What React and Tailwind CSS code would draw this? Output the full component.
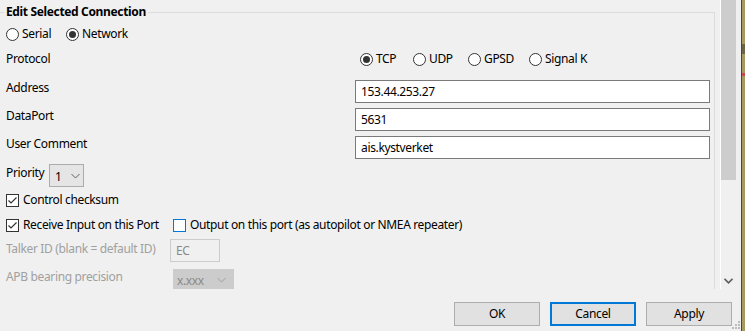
import React from "react";

function Radio({ checked, label, className = "" }) {
  return (
    <div className={"flex items-center " + className}>
      <span className="w-[13px] h-[13px] rounded-full border border-[#333333] bg-white flex items-center justify-center shrink-0">
        {checked && <span className="w-[7px] h-[7px] rounded-full bg-[#333333]" />}
      </span>
      <span className="ml-[3px]">{label}</span>
    </div>
  );
}

function Check({ checked, label, blue, className = "" }) {
  return (
    <div className={"flex items-center " + className}>
      <span
        className={
          "w-[13px] h-[13px] border bg-white flex items-center justify-center shrink-0 " +
          (blue ? "border-[#0078d7]" : "border-[#333333]")
        }
      >
        {checked && (
          <svg width="11" height="11" viewBox="0 0 11 11">
            <path d="M1.5 5.5 L4 8 L9.5 2.5" fill="none" stroke="#333333" strokeWidth="1.2" />
          </svg>
        )}
      </span>
      <span className="ml-[4px]">{label}</span>
    </div>
  );
}

function Chevron({ color = "#606060" }) {
  return (
    <svg width="9" height="6" viewBox="0 0 9 6">
      <path d="M0.5 1 L4.5 5 L8.5 1" fill="none" stroke={color} strokeWidth="1" />
    </svg>
  );
}

function Field({ label, value }) {
  return (
    <div className="flex items-start h-[23px] pl-[6px]">
      <span className="w-[349px]">{label}</span>
      <div className="w-[355px] h-[23px] border border-[#7a7a7a] bg-white flex items-center pl-[5px]">
        {value}
      </div>
    </div>
  );
}

function Button({ children, focus }) {
  return (
    <div
      className={
        "w-[86px] h-[24px] bg-[#e1e1e1] flex items-center justify-center " +
        (focus ? "border-2 border-[#0078d7]" : "border border-[#adadad]")
      }
    >
      {children}
    </div>
  );
}

export default function App() {
  return (
    <div
      className="w-[745px] h-[331px] bg-[#f0f0f0] flex overflow-hidden text-[12px] leading-[16px] tracking-[-0.35px] text-black"
      style={{ fontFamily: '"Noto Sans", "Segoe UI", sans-serif' }}
    >
      <div className="w-[741px] h-full flex flex-col relative">
        <div className="h-[289px] flex">
          <div className="w-[715px] h-[289px] pt-[12px] overflow-hidden">
            <div className="h-[277px] border-t border-r border-[#dcdcdc]">
              <div className="-mt-[9px] ml-[4px] px-[2px] bg-[#f0f0f0] w-fit font-bold">
                Edit Selected Connection
              </div>
              <div className="mt-[6px] h-[16px] flex items-center pl-[6px]">
                <Radio label="Serial" className="w-[60px]" />
                <Radio label="Network" checked />
              </div>
              <div className="mt-[9px] h-[16px] flex items-center pl-[6px]">
                <span className="w-[354px]">Protocol</span>
                <Radio label="TCP" checked className="w-[53px]" />
                <Radio label="UDP" className="w-[55px]" />
                <Radio label="GPSD" className="w-[61px]" />
                <Radio label="Signal K" />
              </div>
              <div className="mt-[13px] flex flex-col gap-[5px]">
                <Field label="Address" value="153.44.253.27" />
                <Field label="DataPort" value="5631" />
                <Field label="User Comment" value="ais.kystverket" />
              </div>
              <div className="mt-[5px] h-[23px] flex items-start pl-[6px]">
                <span className="mt-[1px] w-[43px]">Priority</span>
                <div className="w-[35px] h-[23px] bg-[#e5e5e5] border border-[#acacac] flex items-center pl-[5px] pt-[3px]">
                  <span>1</span>
                  <span className="ml-[9px] -mt-[3px]">
                    <Chevron />
                  </span>
                </div>
              </div>
              <div className="mt-[5px] h-[16px] flex items-center pl-[6px]">
                <Check label="Control checksum" checked />
              </div>
              <div className="mt-[9px] h-[16px] flex items-center pl-[6px]">
                <Check label="Receive Input on this Port" checked className="w-[167px]" />
                <Check label="Output on this port (as autopilot or NMEA repeater)" blue />
              </div>
              <div className="mt-[6px] h-[23px] flex items-start pl-[6px] text-[#a0a0a0]">
                <span className="w-[164px] mt-[2px]">Talker ID (blank = default ID)</span>
                <div className="w-[50px] h-[23px] border border-[#cccccc] bg-[#f0f0f0] flex items-center pl-[5px] text-[#8a8a8a]">
                  EC
                </div>
              </div>
              <div className="mt-[7px] h-[21px] flex items-start pl-[6px] text-[#a0a0a0]">
                <span className="w-[167px]">APB bearing precision</span>
                <div className="w-[61px] h-[21px] bg-[#cccccc] flex items-center pl-[4px] pt-[2px] text-[#8a8a8a]">
                  <span>x.xxx</span>
                  <span className="ml-[13px] -mt-[2px]">
                    <Chevron color="#a0a0a0" />
                  </span>
                </div>
              </div>
            </div>
          </div>
          <div className="w-[5px]" />
          <div className="w-[16px] h-full border-l border-white flex flex-col">
            <div className="h-[180px] bg-[#cdcdcd]" />
            <div className="flex-1 flex items-end justify-center pb-[5px]">
              <svg width="9" height="6" viewBox="0 0 9 6">
                <path d="M0.5 0.8 L4.5 4.8 L8.5 0.8" fill="none" stroke="#606060" strokeWidth="1.6" />
              </svg>
            </div>
          </div>
        </div>
        <div className="mt-[13px] flex justify-end gap-[10px] pr-[9px]">
          <Button>OK</Button>
          <Button focus>Cancel</Button>
          <Button>Apply</Button>
        </div>
        <div className="absolute right-[1px] bottom-[2px] w-[8px] h-[8px]">
          <svg width="8" height="8" viewBox="0 0 8 8">
            <rect x="6" y="0" width="2" height="2" fill="#bcbcbc" />
            <rect x="3" y="3" width="2" height="2" fill="#bcbcbc" />
            <rect x="6" y="3" width="2" height="2" fill="#bcbcbc" />
            <rect x="0" y="6" width="2" height="2" fill="#bcbcbc" />
            <rect x="3" y="6" width="2" height="2" fill="#bcbcbc" />
            <rect x="6" y="6" width="2" height="2" fill="#bcbcbc" />
          </svg>
        </div>
      </div>
      <div className="w-[1px] h-full bg-[#4a4636]" />
      <div className="w-[3px] h-full bg-[#a59b62] flex flex-col">
        <div className="h-[44px]" />
        <div className="h-[10px] bg-[#6b6447]" />
        <div className="h-[19px]" />
        <div className="h-[3px] bg-[#c2485a]" />
      </div>
    </div>
  );
}
